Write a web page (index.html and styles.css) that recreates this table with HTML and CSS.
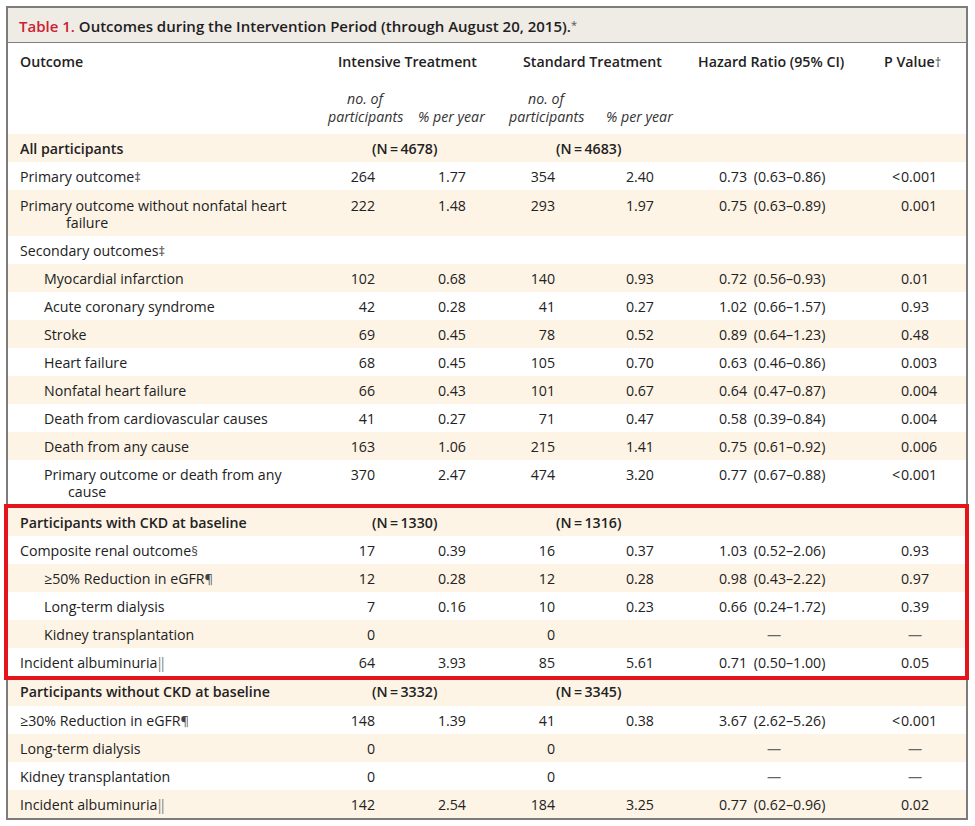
FILE: index.html
```html
<!DOCTYPE html>
<html lang="en">
<head>
<meta charset="utf-8">
<title>Table 1. Outcomes during the Intervention Period</title>
<link rel="stylesheet" href="styles.css">
</head>
<body>
<div class="frame">
  <div class="title"><span class="tnum">Table 1.</span> Outcomes during the Intervention Period (through August 20, 2015).<span class="star">*</span></div>

  <div class="hrow">
    <div class="h-lab">Outcome</div>
    <div>Intensive Treatment</div>
    <div>Standard Treatment</div>
    <div>Hazard Ratio (95% CI)</div>
    <div>P Value<span class="fn">†</span></div>
  </div>
  <div class="subrow">
    <div></div>
    <div class="sub-c">no. of<br>participants</div>
    <div class="sub-l">% per year</div>
    <div class="sub-c">no. of<br>participants</div>
    <div class="sub-l2">% per year</div>
  </div>

  <div class="row sec alt">
    <div class="lab">All participants</div>
    <div class="nI">(N&#8201;=&#8201;4678)</div>
    <div class="nS">(N&#8201;=&#8201;4683)</div>
  </div>
  <div class="row">
    <div class="lab">Primary outcome<span class="fn">‡</span></div>
    <div class="num">264</div><div class="num">1.77</div><div class="num">354</div><div class="num">2.40</div>
    <div class="hr">0.73 (0.63–0.86)</div><div class="pv"><span class="lt">&lt;</span>0.001</div>
  </div>
  <div class="row alt two">
    <div class="lab">Primary outcome without nonfatal heart failure</div>
    <div class="num">222</div><div class="num">1.48</div><div class="num">293</div><div class="num">1.97</div>
    <div class="hr">0.75 (0.63–0.89)</div><div class="pv">0.001</div>
  </div>
  <div class="row">
    <div class="lab">Secondary outcomes<span class="fn">‡</span></div>
  </div>
  <div class="row alt">
    <div class="lab ind">Myocardial infarction</div>
    <div class="num">102</div><div class="num">0.68</div><div class="num">140</div><div class="num">0.93</div>
    <div class="hr">0.72 (0.56–0.93)</div><div class="pv">0.01</div>
  </div>
  <div class="row">
    <div class="lab ind">Acute coronary syndrome</div>
    <div class="num">42</div><div class="num">0.28</div><div class="num">41</div><div class="num">0.27</div>
    <div class="hr">1.02 (0.66–1.57)</div><div class="pv">0.93</div>
  </div>
  <div class="row alt">
    <div class="lab ind">Stroke</div>
    <div class="num">69</div><div class="num">0.45</div><div class="num">78</div><div class="num">0.52</div>
    <div class="hr">0.89 (0.64–1.23)</div><div class="pv">0.48</div>
  </div>
  <div class="row">
    <div class="lab ind">Heart failure</div>
    <div class="num">68</div><div class="num">0.45</div><div class="num">105</div><div class="num">0.70</div>
    <div class="hr">0.63 (0.46–0.86)</div><div class="pv">0.003</div>
  </div>
  <div class="row alt">
    <div class="lab ind">Nonfatal heart failure</div>
    <div class="num">66</div><div class="num">0.43</div><div class="num">101</div><div class="num">0.67</div>
    <div class="hr">0.64 (0.47–0.87)</div><div class="pv">0.004</div>
  </div>
  <div class="row">
    <div class="lab ind">Death from cardiovascular causes</div>
    <div class="num">41</div><div class="num">0.27</div><div class="num">71</div><div class="num">0.47</div>
    <div class="hr">0.58 (0.39–0.84)</div><div class="pv">0.004</div>
  </div>
  <div class="row alt">
    <div class="lab ind">Death from any cause</div>
    <div class="num">163</div><div class="num">1.06</div><div class="num">215</div><div class="num">1.41</div>
    <div class="hr">0.75 (0.61–0.92)</div><div class="pv">0.006</div>
  </div>
  <div class="row two tight">
    <div class="lab ind">Primary outcome or death from any cause</div>
    <div class="num">370</div><div class="num">2.47</div><div class="num">474</div><div class="num">3.20</div>
    <div class="hr">0.77 (0.67–0.88)</div><div class="pv"><span class="lt">&lt;</span>0.001</div>
  </div>

  <div class="mark">
    <div class="row sec alt">
      <div class="lab">Participants with CKD at baseline</div>
      <div class="nI">(N&#8201;=&#8201;1330)</div>
      <div class="nS">(N&#8201;=&#8201;1316)</div>
    </div>
    <div class="row">
      <div class="lab">Composite renal outcome<span class="fn">§</span></div>
      <div class="num">17</div><div class="num">0.39</div><div class="num">16</div><div class="num">0.37</div>
      <div class="hr">1.03 (0.52–2.06)</div><div class="pv">0.93</div>
    </div>
    <div class="row alt">
      <div class="lab ind"><span class="sym">≥</span>50% Reduction in eGFR<span class="fn">¶</span></div>
      <div class="num">12</div><div class="num">0.28</div><div class="num">12</div><div class="num">0.28</div>
      <div class="hr">0.98 (0.43–2.22)</div><div class="pv">0.97</div>
    </div>
    <div class="row">
      <div class="lab ind">Long-term dialysis</div>
      <div class="num">7</div><div class="num">0.16</div><div class="num">10</div><div class="num">0.23</div>
      <div class="hr">0.66 (0.24–1.72)</div><div class="pv">0.39</div>
    </div>
    <div class="row alt">
      <div class="lab ind">Kidney transplantation</div>
      <div class="num">0</div><div class="num"></div><div class="num">0</div><div class="num"></div>
      <div class="hr"><span class="dash-hr">—</span></div><div class="pv"><span class="dash-pv">—</span></div>
    </div>
    <div class="row">
      <div class="lab">Incident albuminuria<span class="sym bar">‖</span></div>
      <div class="num">64</div><div class="num">3.93</div><div class="num">85</div><div class="num">5.61</div>
      <div class="hr">0.71 (0.50–1.00)</div><div class="pv">0.05</div>
    </div>
  </div>

  <div class="row sec alt after">
    <div class="lab">Participants without CKD at baseline</div>
    <div class="nI">(N&#8201;=&#8201;3332)</div>
    <div class="nS">(N&#8201;=&#8201;3345)</div>
  </div>
  <div class="row">
    <div class="lab"><span class="sym">≥</span>30% Reduction in eGFR<span class="fn">¶</span></div>
    <div class="num">148</div><div class="num">1.39</div><div class="num">41</div><div class="num">0.38</div>
    <div class="hr">3.67 (2.62–5.26)</div><div class="pv"><span class="lt">&lt;</span>0.001</div>
  </div>
  <div class="row alt">
    <div class="lab">Long-term dialysis</div>
    <div class="num">0</div><div class="num"></div><div class="num">0</div><div class="num"></div>
    <div class="hr"><span class="dash-hr">—</span></div><div class="pv"><span class="dash-pv">—</span></div>
  </div>
  <div class="row">
    <div class="lab">Kidney transplantation</div>
    <div class="num">0</div><div class="num"></div><div class="num">0</div><div class="num"></div>
    <div class="hr"><span class="dash-hr">—</span></div><div class="pv"><span class="dash-pv">—</span></div>
  </div>
  <div class="row alt">
    <div class="lab">Incident albuminuria<span class="sym bar">‖</span></div>
    <div class="num">142</div><div class="num">2.54</div><div class="num">184</div><div class="num">3.25</div>
    <div class="hr">0.77 (0.62–0.96)</div><div class="pv">0.02</div>
  </div>
</div>
</body>
</html>
```

FILE: styles.css
```css
html, body {
  margin: 0;
  padding: 0;
  background: #ffffff;
}
body {
  padding: 6px 0 0 6px;
  font-family: "Open Sans", "Noto Sans", "Liberation Sans", sans-serif;
  font-size: 14.2px;
  color: #222222;
}
.frame {
  width: 962px;
  box-sizing: border-box;
  border: 2px solid #7c7c7c;
  background: #ffffff;
}
.title {
  background: #efebe5;
  border-bottom: 1px solid #808080;
  height: 35px;
  box-sizing: border-box;
  padding: 7px 11px 0;
  font-size: 15px;
  line-height: 20px;
  font-weight: 600;
  color: #1e1e1e;
  white-space: nowrap;
}
.tnum {
  color: #cc2131;
}
.star {
  font-size: 11px;
  font-weight: 400;
  color: #555;
  vertical-align: 3px;
}
.fn {
  font-size: 13px;
  line-height: 0;
  color: #444;
}
.sym {
  line-height: 0;
}
.bar {
  color: #888;
}

/* header */
.hrow {
  display: grid;
  grid-template-columns: 330px 185px 175px 186px 1fr;
  padding: 10px 0 11px;
  line-height: 17px;
  font-weight: 600;
  white-space: nowrap;
}
.h-lab {
  padding-left: 12px;
}
.hrow .fn {
  font-weight: 400;
}
.subrow {
  display: grid;
  grid-template-columns: 320px 74px 107px 74px 1fr;
  padding: 9px 0 8px;
  line-height: 18px;
  font-style: italic;
  color: #333;
  white-space: nowrap;
}
.sub-c {
  text-align: center;
}
.sub-l {
  padding-left: 16px;
  align-self: end;
}
.sub-l2 {
  padding-left: 23px;
  align-self: end;
}

/* body rows */
.row {
  display: grid;
  grid-template-columns: 322px 46px 91px 89px 99px 235px 1fr;
  padding: 6px 0 5px;
  line-height: 17px;
  align-items: start;
}
.row.two {
  padding: 7px 0 5px;
}
.row.two.tight {
  padding: 6px 0 4px;
}
.row.after {
  padding: 3px 0 6px;
}
.row.alt {
  background: #fdf4e6;
}
.lab {
  padding-left: 58px;
  text-indent: -46px;
  padding-right: 22px;
}
.lab.ind {
  padding-left: 60px;
  text-indent: -24px;
}
.sec .lab {
  font-weight: 600;
  white-space: nowrap;
}
.nI, .nS {
  font-weight: 600;
  white-space: nowrap;
}
.nI {
  grid-column: 2 / 4;
  padding-left: 42px;
}
.nS {
  grid-column: 4 / 6;
  padding-left: 89px;
}
.num {
  text-align: right;
  padding-right: 1px;
}
.hr {
  padding-left: 64px;
  white-space: nowrap;
  word-spacing: 3px;
}
.pv {
  padding-left: 11px;
  white-space: nowrap;
}
.lt {
  margin-left: -9px;
  display: inline-block;
  width: 9px;
}
.dash-hr {
  display: inline-block;
  width: 110px;
  text-align: center;
  color: #666;
}
.dash-pv {
  display: inline-block;
  width: 28px;
  text-align: center;
  color: #666;
}

/* highlighted group */
.mark {
  border: 4px solid #e3141c;
  margin: 0 -3px 0 -4px;
}
```
